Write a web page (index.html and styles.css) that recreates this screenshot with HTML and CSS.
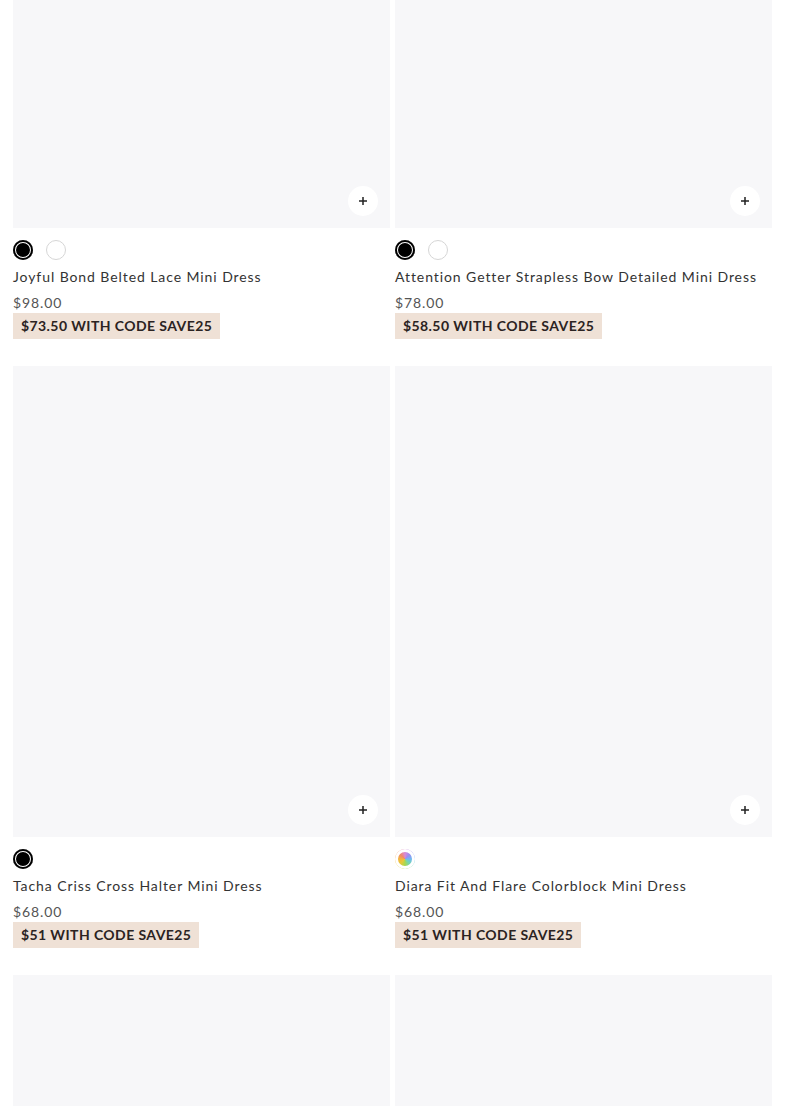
FILE: index.html
```html
<!DOCTYPE html>
<html>
<head>
<meta charset="utf-8">
<link rel="stylesheet" href="styles.css">
</head>
<body>
<div class="grid">
  <div class="card">
    <div class="media"><button class="quick"><svg viewBox="0 0 10 10" width="10" height="10"><path d="M5 1v8M1 5h8" stroke="#222" stroke-width="1.5"/></svg></button></div>
    <div class="swatches"><span class="sw sw-black sel"></span><span class="sw sw-white"></span></div>
    <div class="title">Joyful Bond Belted Lace Mini Dress</div>
    <div class="price">$98.00</div>
    <div class="promo">$73.50 WITH CODE SAVE25</div>
  </div>
  <div class="card">
    <div class="media"><button class="quick"><svg viewBox="0 0 10 10" width="10" height="10"><path d="M5 1v8M1 5h8" stroke="#222" stroke-width="1.5"/></svg></button></div>
    <div class="swatches"><span class="sw sw-black sel"></span><span class="sw sw-white"></span></div>
    <div class="title">Attention Getter Strapless Bow Detailed Mini Dress</div>
    <div class="price">$78.00</div>
    <div class="promo">$58.50 WITH CODE SAVE25</div>
  </div>
  <div class="card">
    <div class="media"><button class="quick"><svg viewBox="0 0 10 10" width="10" height="10"><path d="M5 1v8M1 5h8" stroke="#222" stroke-width="1.5"/></svg></button></div>
    <div class="swatches"><span class="sw sw-black sel"></span></div>
    <div class="title">Tacha Criss Cross Halter Mini Dress</div>
    <div class="price">$68.00</div>
    <div class="promo">$51 WITH CODE SAVE25</div>
  </div>
  <div class="card">
    <div class="media"><button class="quick"><svg viewBox="0 0 10 10" width="10" height="10"><path d="M5 1v8M1 5h8" stroke="#222" stroke-width="1.5"/></svg></button></div>
    <div class="swatches"><span class="sw sw-multi"></span></div>
    <div class="title">Diara Fit And Flare Colorblock Mini Dress</div>
    <div class="price">$68.00</div>
    <div class="promo">$51 WITH CODE SAVE25</div>
  </div>
  <div class="card">
    <div class="media"></div>
  </div>
  <div class="card">
    <div class="media"></div>
  </div>
</div>
</body>
</html>
```
FILE: styles.css
```css
* { box-sizing: border-box; }
html, body { margin: 0; padding: 0; background: #fff; }
body {
  font-family: Lato, "Liberation Sans", sans-serif;
  color: #333;
  overflow: hidden;
}
.grid {
  display: grid;
  grid-template-columns: 377px 377px;
  column-gap: 5px;
  row-gap: 27px;
  padding: 0 13px;
  margin-top: -243px;
}
.card { display: flex; flex-direction: column; }
.media {
  position: relative;
  height: 471px;
  background: #f7f7f9;
}
.quick {
  position: absolute;
  right: 12px;
  bottom: 12px;
  width: 30px;
  height: 30px;
  border-radius: 50%;
  border: 0;
  background: #fff;
  display: flex;
  align-items: center;
  justify-content: center;
  padding: 0;
}
.quick svg { display: block; }
.swatches {
  display: flex;
  gap: 13px;
  margin-top: 12px;
  height: 20px;
}
.sw {
  width: 20px;
  height: 20px;
  border-radius: 50%;
  display: block;
}
.sw-black { background: #000; }
.sw-black.sel { box-shadow: inset 0 0 0 2px #000, inset 0 0 0 3px #fff; }
.sw-white { background: #fff; border: 1px solid #d6d6d6; }
.sw-multi {
  background: conic-gradient(from 270deg, #f3b43c, #f08a6a, #d98ad6, #9c8ef0, #6fb8f2, #74d6b0, #a8d84f, #e6c93a, #f3b43c);
  box-shadow: inset 0 0 0 2px transparent, inset 0 0 0 3px #fff;
}
.title {
  margin-top: 7px;
  font-size: 14px;
  line-height: 20px;
  letter-spacing: 0.92px;
  color: #333;
  white-space: nowrap;
}
.price {
  margin-top: 6px;
  font-size: 14px;
  line-height: 20px;
  letter-spacing: 0.9px;
  color: #555;
}
.promo {
  align-self: flex-start;
  background: #efe1d6;
  color: #2b2322;
  font-weight: 700;
  font-size: 14px;
  line-height: 26px;
  height: 26px;
  padding: 0 8px;
  letter-spacing: 0.42px;
}
```
